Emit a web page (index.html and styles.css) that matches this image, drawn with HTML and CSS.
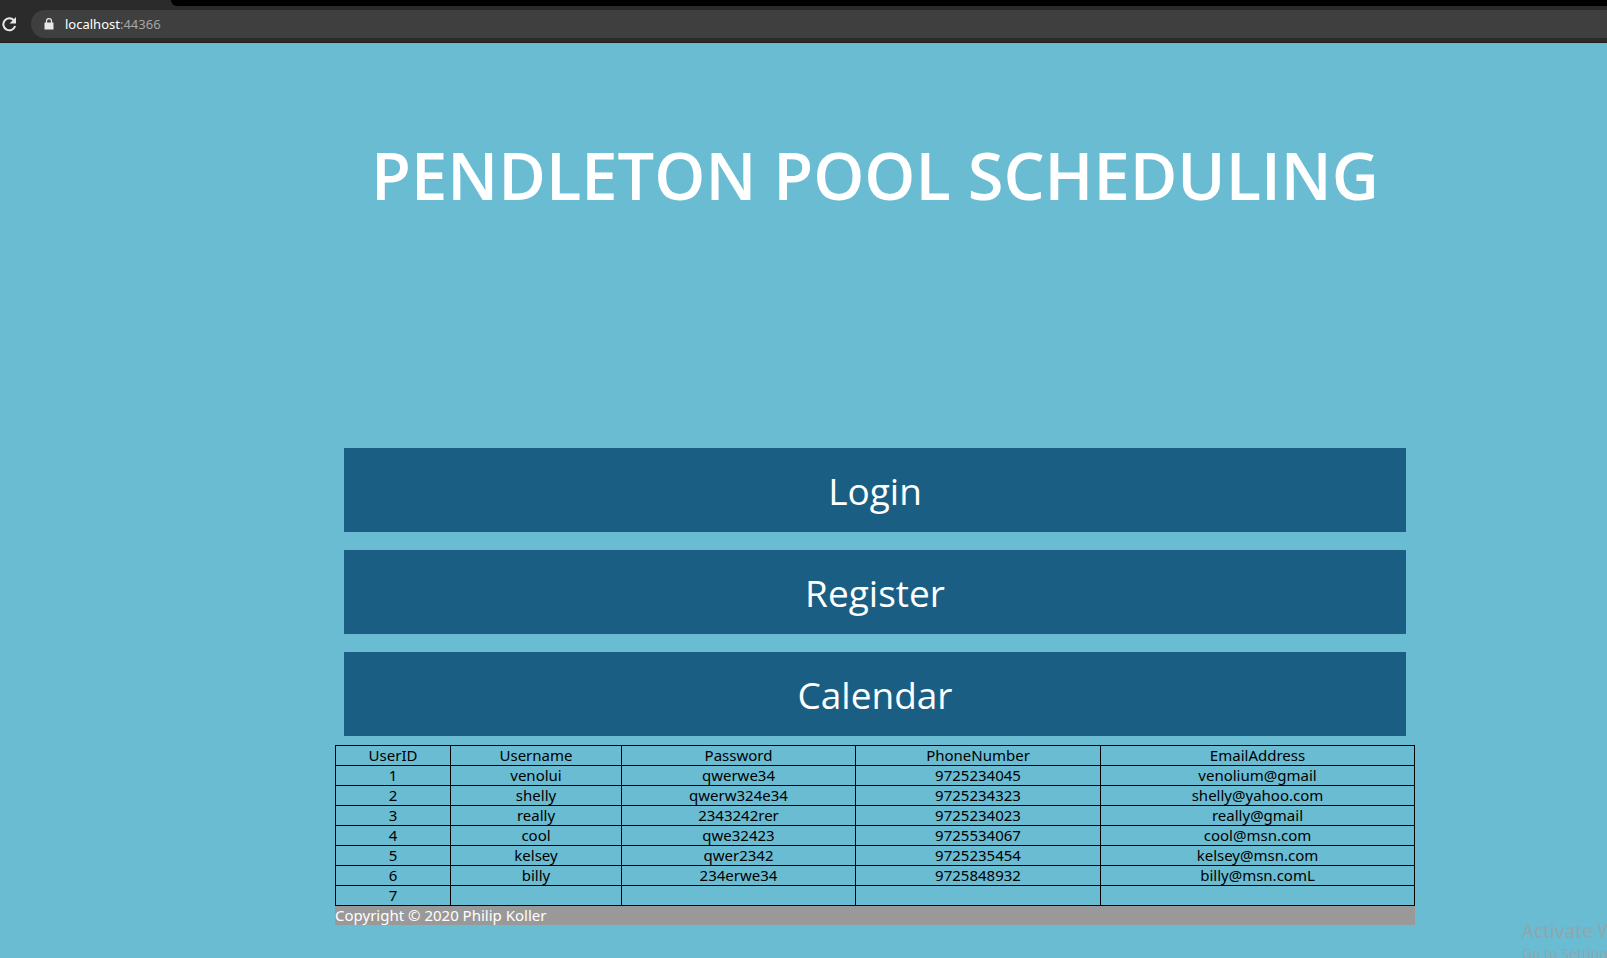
FILE: index.html
```html
<!DOCTYPE html>
<html lang="en">
<head>
<meta charset="utf-8">
<title>Pendleton Pool Scheduling</title>
<link rel="stylesheet" href="styles.css">
</head>
<body>
<div class="browser">
  <div class="tab-strip"></div>
  <div class="toolbar">
    <button class="reload" type="button" aria-label="Reload">
      <svg width="16" height="16" viewBox="0 0 16 16"><path d="M12.9 4.400A6 6 0 1 0 14.100 10" fill="none" stroke="#e8e8e8" stroke-width="2"/><path d="M15 1v6.500H8.500z" fill="#e8e8e8"/></svg>
    </button>
    <div class="address">
      <svg class="lock" width="10" height="12" viewBox="0 0 10 12"><path d="M1 4.500h8q.5 0 .5.500v6q0 .5-.5.500H1q-.5 0-.5-.5V5q0-.5.500-.5z" fill="#e8e8e8"/><path d="M2.500 5V3a2.500 2.400 0 0 1 5 0v2" fill="none" stroke="#e8e8e8" stroke-width="1.200"/></svg>
      <span class="url"><span class="host">localhost</span>:44366</span>
    </div>
  </div>
</div>
<main class="page">
  <header class="banner"><h1 class="title">PENDLETON POOL SCHEDULING</h1></header>
  <nav class="menu">
    <button class="menu-button" type="button">Login</button>
    <button class="menu-button" type="button">Register</button>
    <button class="menu-button" type="button">Calendar</button>
  </nav>
  <table class="users">
    <colgroup><col class="col-id"><col class="col-name"><col class="col-password"><col class="col-phone"><col class="col-email"></colgroup>
    <thead>
      <tr><th>UserID</th><th>Username</th><th>Password</th><th>PhoneNumber</th><th>EmailAddress</th></tr>
    </thead>
    <tbody>
      <tr><td>1</td><td>venolui</td><td>qwerwe34</td><td>9725234045</td><td>venolium@gmail</td></tr>
      <tr><td>2</td><td>shelly</td><td>qwerw324e34</td><td>9725234323</td><td>shelly@yahoo.com</td></tr>
      <tr><td>3</td><td>really</td><td>2343242rer</td><td>9725234023</td><td>really@gmail</td></tr>
      <tr><td>4</td><td>cool</td><td>qwe32423</td><td>9725534067</td><td>cool@msn.com</td></tr>
      <tr><td>5</td><td>kelsey</td><td>qwer2342</td><td>9725235454</td><td>kelsey@msn.com</td></tr>
      <tr><td>6</td><td>billy</td><td>234erwe34</td><td>9725848932</td><td>billy@msn.comL</td></tr>
      <tr><td>7</td><td></td><td></td><td></td><td></td></tr>
    </tbody>
  </table>
  <footer class="footer">Copyright © 2020 Philip Koller</footer>
</main>
<aside class="watermark">
  <div class="watermark-title">Activate Windows</div>
  <div class="watermark-text">Go to Settings to activate Windows.</div>
</aside>
</body>
</html>
```
FILE: styles.css
```css
* {
  box-sizing: border-box;
}

body {
  margin: 0;
  min-height: 100vh;
  position: relative;
  overflow: hidden;
  background: #69bcd2;
  color: #000;
  font: 15px/19px "Noto Sans", "Open Sans", sans-serif;
}

.browser {
  background: #2b2b2b;
  border-bottom: 1px solid #202020;
}

.tab-strip {
  height: 6px;
  margin-left: 171px;
  background: #000;
  border-bottom-left-radius: 6px;
}

.toolbar {
  display: flex;
  align-items: center;
  gap: 14px;
  padding: 4px 0;
}

.reload {
  display: flex;
  padding: 0 0 0 1px;
  border: 0;
  background: none;
}

.address {
  flex: 1;
  display: flex;
  align-items: center;
  gap: 11px;
  height: 28px;
  padding-left: 13px;
  border-radius: 14px 0 0 14px;
  background: #3f3f3f;
}

.url {
  color: #a6a6a6;
  font-size: 13px;
}

.host {
  color: #fff;
}

.page {
  margin: 0 192px 0 335px;
}

.banner {
  padding: 82px 0 214px;
}

.title {
  margin: 0;
  color: #fff;
  font-size: 65px;
  font-family: "Open Sans", "Noto Sans", sans-serif;
  font-weight: 600;
  line-height: 100px;
  text-align: center;
  white-space: nowrap;
}

.menu {
  display: grid;
  gap: 18px;
  padding: 9px;
}

.menu-button {
  padding: 13px 12px 11px;
  border: 0;
  background: #1a5f83;
  color: #fff;
  font: 37px/60px "Open Sans", "Noto Sans", sans-serif;
}

.users {
  width: 100%;
  border-collapse: collapse;
  table-layout: fixed;
  text-align: center;
}

.users th,
.users td {
  height: 20px;
  padding: 0;
  border: 1px solid #000;
  font-weight: 400;
}

.col-id { width: 115px; }
.col-name { width: 171px; }
.col-password { width: 234px; }
.col-phone { width: 245px; }

.footer {
  background: #999;
  color: #fff;
}

.watermark {
  position: absolute;
  top: 918px;
  left: 1522px;
  color: #8ea8ae;
  font-size: 14px;
  white-space: nowrap;
}

.watermark-title {
  font-size: 19px;
  line-height: 26px;
}
```
